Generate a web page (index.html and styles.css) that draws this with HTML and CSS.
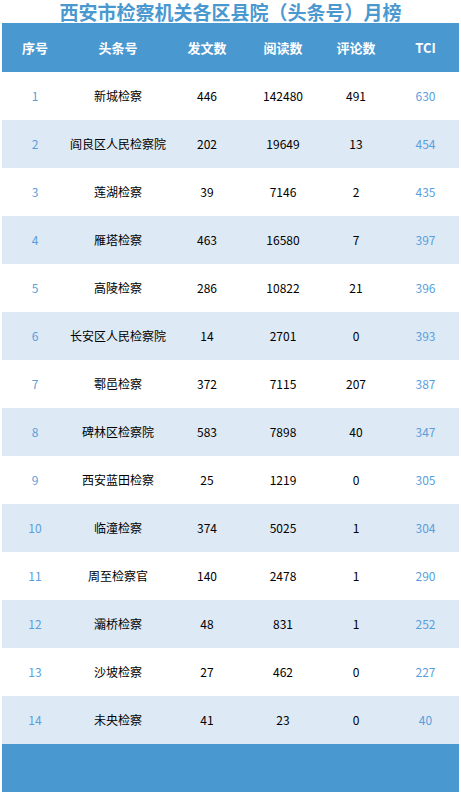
FILE: index.html
```html
<!DOCTYPE html>
<html lang="zh-CN">
<head>
    <meta charset="UTF-8">
    <meta name="viewport" content="width=device-width, initial-scale=1.0">
    <title>西安市检察机关各区县院（头条号）月榜</title>
    <link rel="stylesheet" href="styles.css">
</head>
<body>
    <h1 class="rank-title">西安市检察机关各区县院（头条号）月榜</h1>
    <div class="rank-table">
        <div class="rank-row rank-head">
            <span>序号</span><span>头条号</span><span>发文数</span><span>阅读数</span><span>评论数</span><span>TCI</span>
        </div>
        <div class="rank-row"><span class="num">1</span><span>新城检察</span><span>446</span><span>142480</span><span>491</span><span class="num">630</span></div>
        <div class="rank-row alt"><span class="num">2</span><span>阎良区人民检察院</span><span>202</span><span>19649</span><span>13</span><span class="num">454</span></div>
        <div class="rank-row"><span class="num">3</span><span>莲湖检察</span><span>39</span><span>7146</span><span>2</span><span class="num">435</span></div>
        <div class="rank-row alt"><span class="num">4</span><span>雁塔检察</span><span>463</span><span>16580</span><span>7</span><span class="num">397</span></div>
        <div class="rank-row"><span class="num">5</span><span>高陵检察</span><span>286</span><span>10822</span><span>21</span><span class="num">396</span></div>
        <div class="rank-row alt"><span class="num">6</span><span>长安区人民检察院</span><span>14</span><span>2701</span><span>0</span><span class="num">393</span></div>
        <div class="rank-row"><span class="num">7</span><span>鄠邑检察</span><span>372</span><span>7115</span><span>207</span><span class="num">387</span></div>
        <div class="rank-row alt"><span class="num">8</span><span>碑林区检察院</span><span>583</span><span>7898</span><span>40</span><span class="num">347</span></div>
        <div class="rank-row"><span class="num">9</span><span>西安蓝田检察</span><span>25</span><span>1219</span><span>0</span><span class="num">305</span></div>
        <div class="rank-row alt"><span class="num">10</span><span>临潼检察</span><span>374</span><span>5025</span><span>1</span><span class="num">304</span></div>
        <div class="rank-row"><span class="num">11</span><span>周至检察官</span><span>140</span><span>2478</span><span>1</span><span class="num">290</span></div>
        <div class="rank-row alt"><span class="num">12</span><span>灞桥检察</span><span>48</span><span>831</span><span>1</span><span class="num">252</span></div>
        <div class="rank-row"><span class="num">13</span><span>沙坡检察</span><span>27</span><span>462</span><span>0</span><span class="num">227</span></div>
        <div class="rank-row alt"><span class="num">14</span><span>未央检察</span><span>41</span><span>23</span><span>0</span><span class="num">40</span></div>
        <div class="rank-foot"></div>
    </div>
</body>
</html>
```

FILE: styles.css
```css
body {
    margin: 0;
    padding: 0;
    background-color: #ffffff;
    font-family: "Noto Sans CJK SC", "Noto Sans", sans-serif;
    color: #000000;
}

.rank-title {
    margin: 0;
    height: 23px;
    line-height: 23px;
    font-size: 19px;
    font-weight: bold;
    color: #4a98d0;
    text-align: center;
}

.rank-table {
    margin: 0 2px;
}

.rank-row {
    display: grid;
    grid-template-columns: 66px 100px 78px 74px 72px 67px;
    height: 48px;
    align-items: center;
    font-size: 12px;
    line-height: 16px;
}

.rank-row span {
    text-align: center;
}

.rank-head {
    height: 49px;
    background-color: #4a98d0;
    color: #ffffff;
    font-size: 13px;
    font-weight: bold;
}

.alt {
    background-color: #dde9f5;
}

.num {
    color: #5a9fdc;
}

.rank-foot {
    height: 48px;
    background-color: #4a98d0;
}
```
